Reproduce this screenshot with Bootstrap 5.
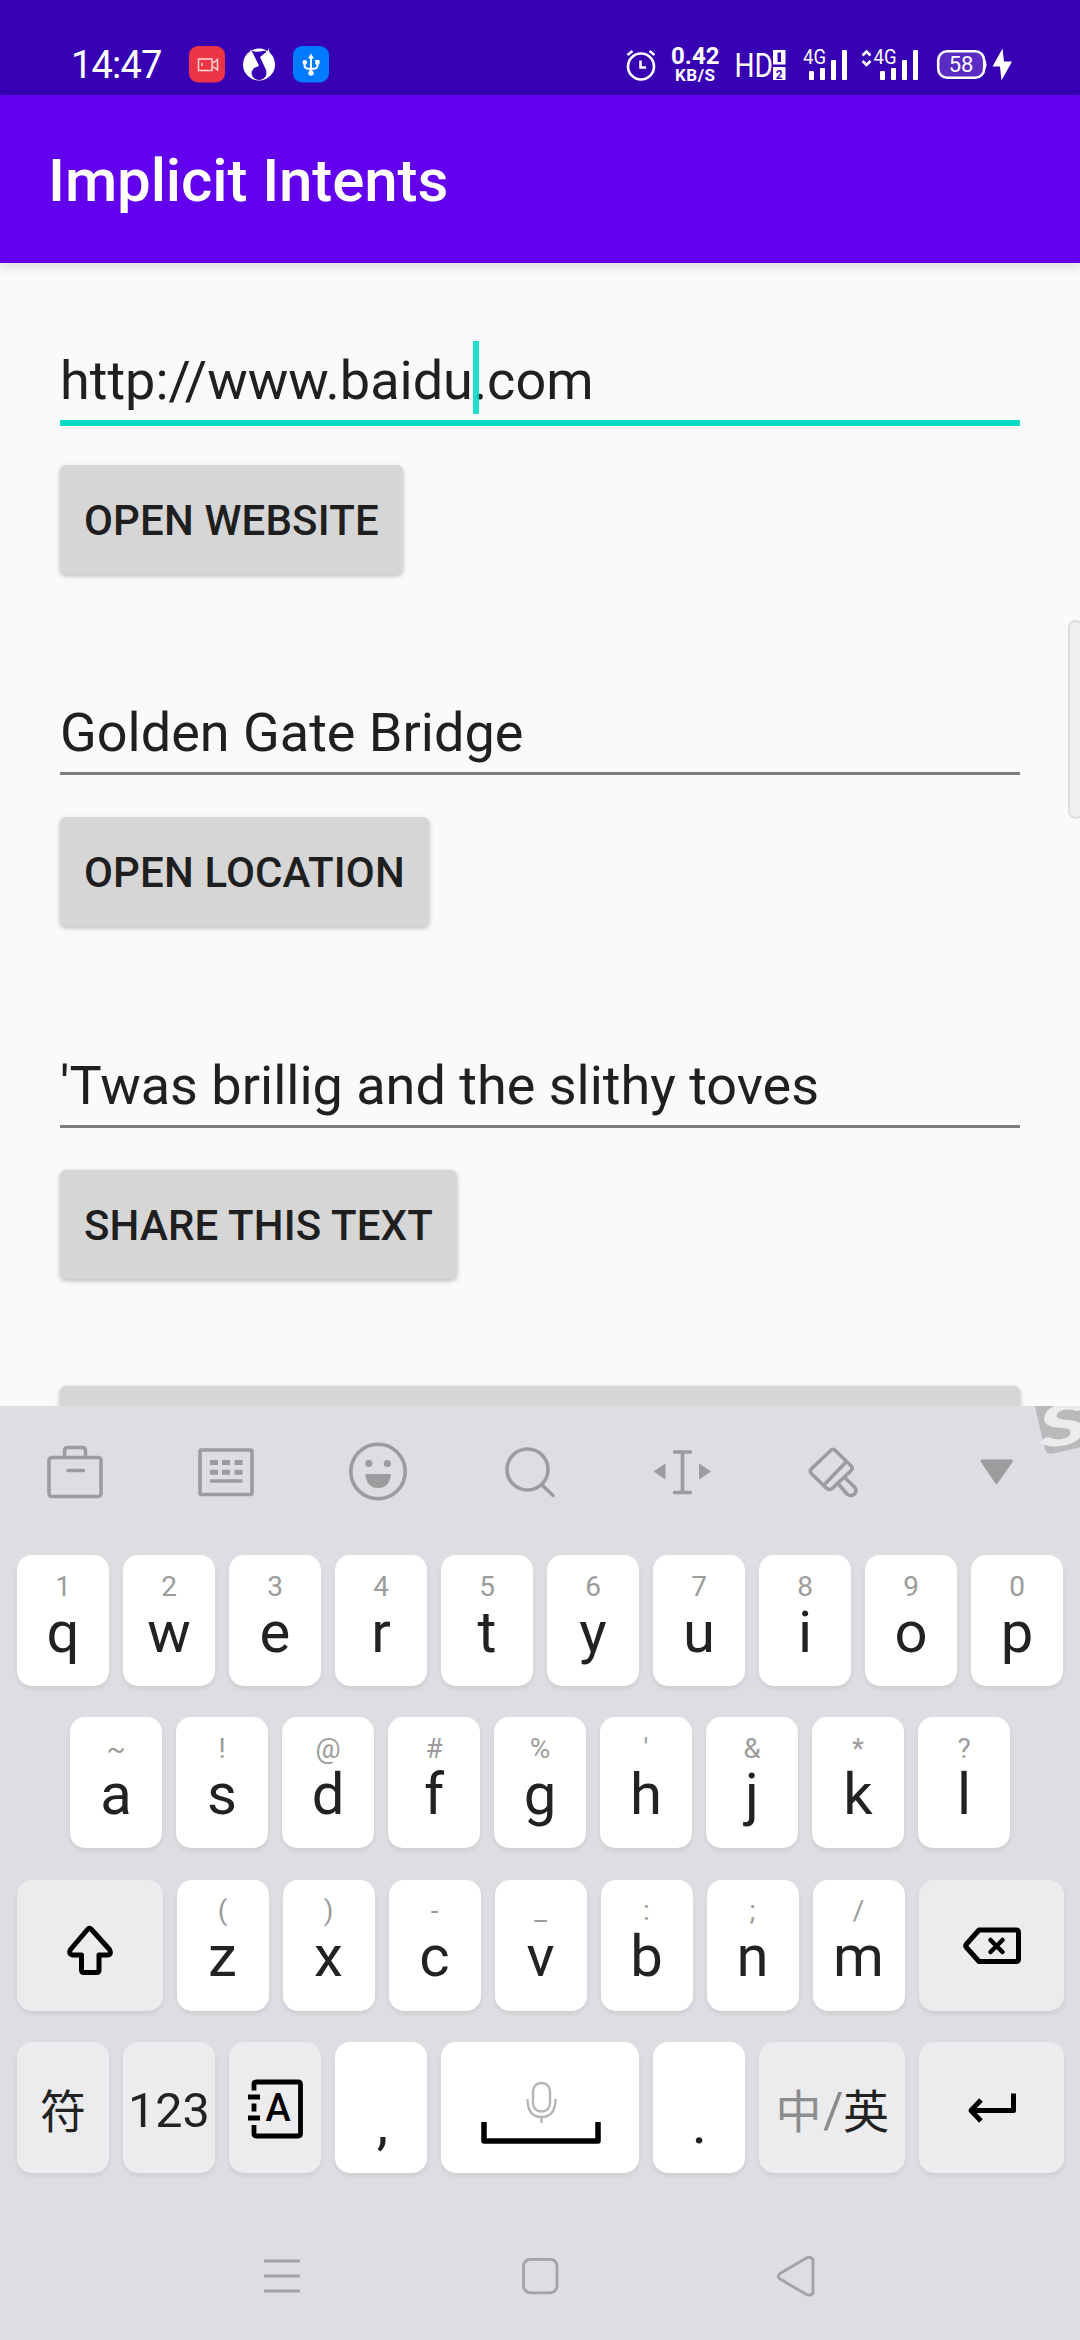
<!DOCTYPE html>
<html lang="en">
<head>
<meta charset="utf-8">
<meta name="viewport" content="width=device-width, initial-scale=1">
<title>Implicit Intents</title>
<link href="https://cdn.jsdelivr.net/npm/bootstrap@5.3.0/dist/css/bootstrap.min.css" rel="stylesheet">
<style>
  body { font-family: Roboto, "Noto Sans CJK SC", sans-serif; background: #fafafa; }
  svg { display: block; flex: none; }
  .screen { width: 1080px; height: 2340px; }
  .status-strip { height: 95px; background: #3700b3; padding: 44px 64px 0 71px; }
  .clock-text { font-size: 38px; line-height: 42px; width: 118px; letter-spacing: -.8px; }
  .app-header { height: 168px; background: #6200ee; padding: 0 48px; box-shadow: 0 3px 12px rgba(0,0,0,.14); z-index: 1; }
  .app-header h1 { font-size: 60px; line-height: 72px; font-weight: 500; padding-top: 4px; letter-spacing: -.1px; }
  .form-area { height: 1143px; padding: 85.5px 60px 0; }
  .intent-group { height: 352.5px; flex: none; }
  .field-slot { height: 116px; }
  .field-line { height: 74px; line-height: 64px; font-size: 54px; color: #202020; border-bottom: 3px solid #7c7c7c; white-space: pre; }
  .field-line.focused { height: 77px; border-bottom: 6px solid #03dac5; }
  .caret { left: 413px; top: -8px; width: 6px; height: 73px; background: #03dac5; opacity: .88; }
  .btn-android { height: 109px; border: 0; border-radius: 6px; background: #d6d6d6; color: #1f1f1f; font-size: 42px; font-weight: 500; line-height: 1; padding: 3px 24px 0; letter-spacing: .15px; box-shadow: 0 2px 5px rgba(0,0,0,.25); }
  .scroll-thumb { right: -3px; top: 620px; width: 15px; height: 199px; background: #f0f0f0; border: 2px solid #dedede; border-radius: 8px; }
  .ime { height: 934px; background: #dddee1; padding: 149px 17px 0; z-index: 2; }
  .ime-tools { left: 0; right: 0; top: 0; height: 140px; }
  .key-row { gap: 14px; height: 131px; margin-bottom: 31.3px; }
  .key { display: flex; flex-direction: column; align-items: center; justify-content: flex-start; flex: none; width: 92px; height: 131px; background: #fff; border: 0; border-radius: 15px; padding: 0; box-shadow: 0 3px 4px rgba(0,0,0,.07); color: #222; font-size: 58px; line-height: 60px; }
  .key-hint { height: 30px; font-size: 28px; line-height: 30px; color: #9c9c9c; margin-top: 16.5px; }
  .key-w { width: 145.5px; }
  .key-space { width: 198px; }
  .key-fn { background: #ececee; }
</style>
</head>
<body>
<div class="screen d-flex flex-column position-relative overflow-hidden">

  <div class="status-strip d-flex align-items-start text-white flex-shrink-0">
    <span class="clock-text">14:47</span>
    <svg width="36" height="44" viewBox="189 44 36 44"><rect x="189" y="46" width="36" height="36.500" rx="9" fill="#eb3546"/><g fill="none" stroke="#ffd9d6" stroke-width="1.500"><rect x="198.500" y="59" width="13.500" height="11.500"/><path d="M213 63l4.500-3.500v10.500l-4.500-3.500M202 63v3"/></g></svg>
    <svg width="36" height="44" viewBox="241 44 36 44" style="margin-left:16px"><circle cx="259" cy="64.500" r="16" fill="#fff"/><path d="M268.500 48l-2.500 9 4-2z" fill="#fff"/><g fill="#3700b3"><ellipse cx="259" cy="73.300" rx="7.400" ry="6.800"/><path d="M251.500 50.500q4 2.500 13.500 0l1.500 1.500-6.500 5 6.500 14-5.500 3-7-3.500 5-5z"/></g></svg>
    <svg width="36" height="44" viewBox="293 44 36 44" style="margin-left:16px"><rect x="293" y="46" width="36" height="36.500" rx="9" fill="#007aff"/><g stroke="#fff" stroke-width="2" fill="none"><path d="M311 57v15M304.500 63v2.500q0 3.500 6.500 3.500t6.500-3.500v-2.500"/></g><g fill="#fff"><path d="M311 53.500l3 5h-6z"/><circle cx="304.800" cy="62.300" r="2.300"/><rect x="315.200" y="60" width="4.300" height="4.300"/><circle cx="311" cy="73" r="2.700"/></g></svg>

    <svg class="ms-auto" width="392" height="44" viewBox="623 44 392 44" fill="#fff" font-family="Roboto, sans-serif">
      <g fill="none" stroke="#fff" stroke-width="2.600"><circle cx="640" cy="66.500" r="13"/><path d="M639.500 60.500v7h5.500M626.500 55l5-4M653.500 55l-5-4"/></g>
      <text x="670" y="64" font-size="24" font-weight="700" textLength="48.500">0.42</text>
      <text x="674" y="81" font-size="17" font-weight="700" textLength="40">KB/S</text>
      <text x="733.500" y="76.500" font-size="33" textLength="38.500" lengthAdjust="spacingAndGlyphs">HD</text>
      <rect x="772" y="50" width="12.500" height="14.500"/><rect x="772" y="67" width="12.500" height="13"/>
      <rect x="776.500" y="52.500" width="3.500" height="9.500" fill="#3700b3"/><text x="774.800" y="78.500" font-size="12" font-weight="700" fill="#3700b3">2</text>
      <text x="802" y="64" font-size="20" textLength="23" lengthAdjust="spacingAndGlyphs">4G</text>
      <rect x="808" y="71" width="5" height="9" rx="1"/><rect x="819" y="68" width="5" height="12" rx="1"/><rect x="830" y="60" width="5" height="20" rx="1"/><rect x="841" y="50" width="5" height="30" rx="1"/>
      <path d="M861.500 55.500l4-4 4 4M861.500 61l4 4 4-4" fill="none" stroke="#fff" stroke-width="2.600"/>
      <text x="872.500" y="64" font-size="20" textLength="23" lengthAdjust="spacingAndGlyphs">4G</text>
      <rect x="879" y="71" width="5" height="9" rx="1"/><rect x="890" y="68" width="5" height="12" rx="1"/><rect x="901" y="60" width="5" height="20" rx="1"/><rect x="912" y="50" width="5" height="30" rx="1"/>
      <rect x="937.200" y="51.200" width="46" height="26.500" rx="9" fill="#5a2cc4" stroke="#fff" stroke-width="2.600"/><path d="M984 59.500q3 5 0 10z"/>
      <text x="960" y="71.800" font-size="22" text-anchor="middle">58</text>
      <path d="M1001.500 48.500l-10 18h7.500l1.500 14 10.500-19h-8z"/>
    </svg>
  </div>

  <header class="app-header d-flex align-items-center text-white flex-shrink-0 position-relative"><h1 class="m-0">Implicit Intents</h1></header>

  <main class="form-area d-flex flex-column flex-shrink-0 overflow-hidden">
    <section class="intent-group">
      <div class="field-slot"><div class="field-line focused position-relative">http://www.baidu.com<span class="caret position-absolute"></span></div></div>
      <button class="btn btn-android" type="button">OPEN WEBSITE</button>
    </section>
    <section class="intent-group">
      <div class="field-slot"><div class="field-line">Golden Gate Bridge</div></div>
      <button class="btn btn-android" type="button">OPEN LOCATION</button>
    </section>
    <section class="intent-group">
      <div class="field-slot"><div class="field-line">'Twas brillig and the slithy toves</div></div>
      <button class="btn btn-android" type="button">SHARE THIS TEXT</button>
    </section>
    <button class="btn btn-android w-100 flex-shrink-0" type="button" style="margin-top:-20px"></button>
  </main>
  <div class="scroll-thumb position-absolute"></div>

  <div class="ime position-relative overflow-hidden flex-shrink-0">
    <svg class="ime-tools position-absolute" width="1080" height="140" viewBox="0 1406 1080 140" fill="none" stroke="#9b9c9e" stroke-width="3.600" stroke-linejoin="round" stroke-linecap="round">
      <rect x="49" y="1457.500" width="52" height="39" rx="3"/><path d="M64.500 1457v-6q0-3.500 3.500-3.500h14q3.500 0 3.500 3.500v6M68 1470.500h15.500"/>
      <rect x="200" y="1450" width="52" height="44.500" rx="1.500"/>
      <path d="M210 1462.500h8M222 1462.500h8M234.500 1462.500h8M210 1472.200h8M222 1472.200h8M234.500 1472.200h8" stroke-width="5" stroke-linecap="butt"/><path d="M210 1481h32.500" stroke-linecap="butt"/>
      <circle cx="378" cy="1471.500" r="27.200"/><g fill="#9b9c9e" stroke="none"><circle cx="368.800" cy="1463.500" r="3.600"/><circle cx="387.300" cy="1463.500" r="3.600"/><path d="M365.300 1474h25.500q-1 14-12.700 14t-12.800-14z"/></g>
      <circle cx="527.500" cy="1469.500" r="20.500"/><path d="M542 1485l11 10.500"/>
      <path d="M674.500 1452h16M674.500 1492.500h16M682.500 1452v40"/><path d="M653.500 1471.500l12-8v16zM711 1471.500l-12-8v16z" fill="#9b9c9e" stroke="none"/>
      <path d="M831 1450.300q2-2 4 0l16 15.500q2.500 2.500 0 5l-18 17q-3.500 3.500-7 0l-14.500-14q-2.500-2.500 0-5zM846 1462l-22 23M844 1477l10.500 10q3 4 0 7-4 3-7.500 0l-9.500-11"/>
      <path d="M982 1461h29.500l-15 21.500z" fill="#9b9c9e" stroke-width="3"/>
      <g stroke="none"><rect x="1040" y="1395" width="70" height="55" rx="6" fill="#b9babc" transform="rotate(-13 1065 1425)"/><text font-family="Lato, sans-serif" font-size="60" font-weight="900" font-style="italic" fill="#ebecee" transform="translate(1041 1448) rotate(-7) scale(1.550 .95)">S</text></g>
    </svg>

    <div class="key-row d-flex">
      <button class="key"><div class="key-hint">1</div>q</button><button class="key"><div class="key-hint">2</div>w</button><button class="key"><div class="key-hint">3</div>e</button><button class="key"><div class="key-hint">4</div>r</button><button class="key"><div class="key-hint">5</div>t</button><button class="key"><div class="key-hint">6</div>y</button><button class="key"><div class="key-hint">7</div>u</button><button class="key"><div class="key-hint">8</div>i</button><button class="key"><div class="key-hint">9</div>o</button><button class="key"><div class="key-hint">0</div>p</button>
    </div>
    <div class="key-row d-flex justify-content-center">
      <button class="key"><div class="key-hint">~</div>a</button><button class="key"><div class="key-hint">!</div>s</button><button class="key"><div class="key-hint">@</div>d</button><button class="key"><div class="key-hint">#</div>f</button><button class="key"><div class="key-hint">%</div>g</button><button class="key"><div class="key-hint">'</div>h</button><button class="key"><div class="key-hint">&amp;</div>j</button><button class="key"><div class="key-hint">*</div>k</button><button class="key"><div class="key-hint">?</div>l</button>
    </div>
    <div class="key-row d-flex">
      <button class="key key-w key-fn" aria-label="Shift"><svg width="145" height="131" viewBox="17 1879 145 131" fill="none" stroke="#000" stroke-width="5" stroke-linejoin="round"><path d="M87.500 1928.500q2-2.500 4 0l18 20q2.500 5-2 5.500h-8.500v15q0 2.500-2.500 2.500h-12.500q-2.500 0-2.500-2.500v-15h-9q-4.500-1-2-5.500z"/></svg></button>
      <button class="key"><div class="key-hint">(</div>z</button><button class="key"><div class="key-hint">)</div>x</button><button class="key"><div class="key-hint">-</div>c</button><button class="key"><div class="key-hint">_</div>v</button><button class="key"><div class="key-hint">:</div>b</button><button class="key"><div class="key-hint">;</div>n</button><button class="key"><div class="key-hint">/</div>m</button>
      <button class="key key-w key-fn" aria-label="Backspace"><svg width="145" height="131" viewBox="918 1879 145 131" fill="none" stroke="#000" stroke-width="5" stroke-linejoin="round" stroke-linecap="round"><path d="M978 1929h37q2.500 0 2.500 2.500v26.500q0 2.500-2.500 2.500h-37l-12.500-14q-1.500-1.800 0-3.500z"/><path d="M989.500 1939l12 12M1001.500 1939l-12 12" stroke-width="4.500"/></svg></button>
    </div>
    <div class="key-row d-flex">
      <button class="key key-fn"><svg width="92" height="131" viewBox="17 2043 92 131" fill="#222" text-anchor="middle"><text x="63" y="2128.500" font-size="46">符</text></svg></button>
      <button class="key key-fn"><svg width="92" height="131" viewBox="123 2043 92 131" fill="#222" text-anchor="middle"><text x="169" y="2128" font-size="48.500">123</text></svg></button>
      <button class="key key-fn"><svg width="92" height="131" viewBox="229 2043 92 131" fill="none" stroke="#000" stroke-width="4.800"><path d="M254 2091.500v-6q0-2.500 2.500-2.500h41.500q2.500 0 2.500 2.500v49q0 2.500-2.500 2.500h-41.500q-2.500 0-2.500-2.500v-8.500M248 2098h12M248 2119h12M254 2104.500v8"/><text x="278" y="2122" font-size="38" font-weight="500" text-anchor="middle" fill="#000" stroke="none">A</text></svg></button>
      <button class="key"><svg width="92" height="131" viewBox="335 2043 92 131" fill="#222"><text x="382.500" y="2144" font-size="58" text-anchor="middle">,</text></svg></button>
      <button class="key key-space" aria-label="Space"><svg width="198" height="131" viewBox="441 2043 198 131" fill="none"><path d="M484 2123v19h114v-19" stroke="#000" stroke-width="5.500" stroke-linejoin="round"/><g stroke="#b5b5b5" stroke-width="2.400"><rect x="533" y="2084" width="17" height="28.500" rx="8"/><path d="M527.500 2100q0 18 14 18t14-18M541.500 2118v6"/></g></svg></button>
      <button class="key"><svg width="92" height="131" viewBox="653 2043 92 131" fill="#222"><text x="699.500" y="2144" font-size="58" text-anchor="middle">.</text></svg></button>
      <button class="key key-w key-fn"><svg width="145" height="131" viewBox="759 2043 145 131" font-size="46"><text x="775.500" y="2128.500" fill="#8c8c8c">中</text><text x="823" y="2129" fill="#8c8c8c" font-size="50">/</text><text x="843" y="2128.500" fill="#222">英</text></svg></button>
      <button class="key key-w key-fn" aria-label="Enter"><svg width="145" height="131" viewBox="918 2043 145 131" fill="none" stroke="#000" stroke-width="5" stroke-linejoin="round"><path d="M1012.500 2094.500v17h-42M980 2101l-10 10.500 10 10.500"/></svg></button>
    </div>
    <svg width="1046" height="135" viewBox="17 2204 1046 135" fill="none" stroke="#a2a3a5" stroke-width="2.800" stroke-linejoin="round"><path d="M264 2261h36M264 2276h36M264 2291h36"/><rect x="523.500" y="2259.300" width="33.500" height="33.500" rx="7"/><path d="M780 2273.500l26.500-15.500q4-2 6.500 1.500v33q-2 4-6.500 2l-26.500-15.500q-3.500-2.700 0-5.500z"/></svg>
  </div>
</div>
<script src="https://cdn.jsdelivr.net/npm/bootstrap@5.3.0/dist/js/bootstrap.bundle.min.js"></script>
</body>
</html>
